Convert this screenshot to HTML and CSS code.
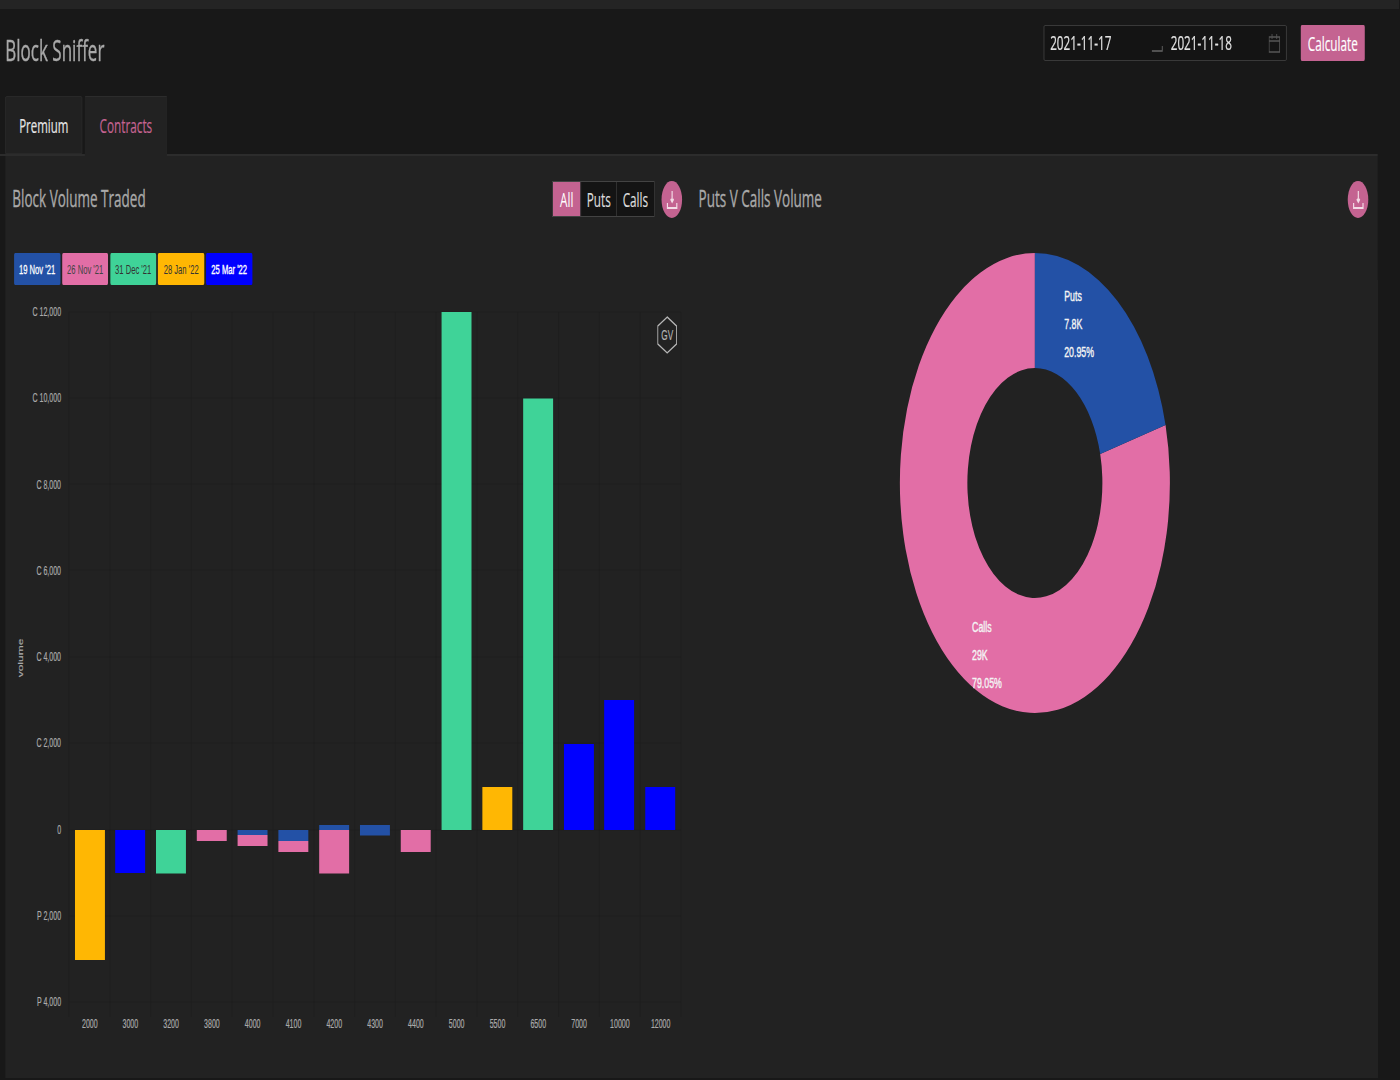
FILE: index.html
```html
<!DOCTYPE html>
<html lang="en">
<head>
<meta charset="utf-8">
<title>Block Sniffer</title>
<link rel="stylesheet" href="styles.css">
</head>
<body>
<div class="frame">
<div class="page">
  <div class="topbar"></div>
  <header class="header">
    <h1 class="brand">Block Sniffer</h1>
    <div class="controls">
      <div class="picker">
        <span class="date">2021-11-17</span>
        <svg class="range-arrow" width="20" height="8" viewBox="0 0 20 8"><path d="M0 7H18V2"/></svg>
        <span class="date">2021-11-18</span>
        <svg class="cal" width="20" height="20" viewBox="0 0 20 20"><path d="M1 4H19V19H1ZM1 8H19M6 1V6M14 1V6"/></svg>
      </div>
      <button class="calc">Calculate</button>
    </div>
  </header>
  <nav class="tabs">
    <div class="tab">Premium</div>
    <div class="tab active">Contracts</div>
  </nav>
  <main class="panel">
    <section class="col">
      <div class="col-head">
        <h2 class="col-title">Block Volume Traded</h2>
        <div class="tools">
          <div class="seg">
            <span class="seg-item on">All</span>
            <span class="seg-item puts">Puts</span>
            <span class="seg-item calls">Calls</span>
          </div>
          <button class="dl"><svg width="20" height="20" viewBox="0 0 20 20"><path d="M10 1V11M7.5 9L10 12L12.5 9M2 13V18H18V13"/></svg></button>
        </div>
      </div>
      <div class="legend">
        <span class="chip c-blue">19 Nov '21</span>
        <span class="chip c-pink">26 Nov '21</span>
        <span class="chip c-green">31 Dec '21</span>
        <span class="chip c-amber">28 Jan '22</span>
        <span class="chip c-pure">25 Mar '22</span>
      </div>
      <svg class="bars" width="1142" height="745" viewBox="0 0 1142 745">
        <g class="grid">
          <path d="M96.5 12H1139M96.5 98H1139M96.5 184H1139M96.5 270H1139M96.5 357H1139M96.5 443H1139M96.5 530H1139M96.5 616H1139M96.5 702H1139"/>
          <path d="M96.5 12V717M166 12V717M235.5 12V717M305 12V717M374.5 12V717M444 12V717M513.5 12V717M583 12V717M652.5 12V717M722 12V717M791.5 12V717M861 12V717M930.5 12V717M1000 12V717M1069.5 12V717M1139 12V717"/>
        </g>
        <g class="ylab">
          <text x="83" y="16">C 12,000</text>
          <text x="83" y="102">C 10,000</text>
          <text x="83" y="189">C 8,000</text>
          <text x="83" y="275">C 6,000</text>
          <text x="83" y="361">C 4,000</text>
          <text x="83" y="447">C 2,000</text>
          <text x="83" y="534">0</text>
          <text x="83" y="620">P 2,000</text>
          <text x="83" y="706">P 4,000</text>
        </g>
        <text class="axis-name" transform="translate(19 358) rotate(-90)">volume</text>
        <rect class="f-amber" x="106.75" y="530" width="51" height="130"/>
        <rect class="f-pure" x="175.25" y="530" width="51" height="43"/>
        <rect class="f-green" x="244.75" y="530" width="51" height="43.5"/>
        <rect class="f-pink" x="314.25" y="530" width="51" height="11"/>
        <rect class="f-blue" x="383.75" y="530" width="51" height="5"/>
        <rect class="f-pink" x="383.75" y="535" width="51" height="11"/>
        <rect class="f-blue" x="453.25" y="530" width="51" height="11"/>
        <rect class="f-pink" x="453.25" y="541" width="51" height="11"/>
        <rect class="f-blue" x="522.75" y="525" width="51" height="5"/>
        <rect class="f-pink" x="522.75" y="530" width="51" height="43.5"/>
        <rect class="f-blue" x="592.25" y="525" width="51" height="10.5"/>
        <rect class="f-pink" x="661.75" y="530" width="51" height="22"/>
        <rect class="f-green" x="731.25" y="12" width="51" height="518"/>
        <rect class="f-amber" x="800.75" y="487" width="51" height="43"/>
        <rect class="f-green" x="870.25" y="98.5" width="51" height="431.5"/>
        <rect class="f-pure" x="939.75" y="444" width="51" height="86"/>
        <rect class="f-pure" x="1008.25" y="400" width="51" height="130"/>
        <rect class="f-pure" x="1078.25" y="487" width="51" height="43"/>
        <g class="xlab">
          <text x="132" y="728">2000</text>
          <text x="201" y="728">3000</text>
          <text x="270.5" y="728">3200</text>
          <text x="340" y="728">3800</text>
          <text x="409.5" y="728">4000</text>
          <text x="479" y="728">4100</text>
          <text x="548.5" y="728">4200</text>
          <text x="618" y="728">4300</text>
          <text x="687.5" y="728">4400</text>
          <text x="757" y="728">5000</text>
          <text x="826.5" y="728">5500</text>
          <text x="896" y="728">6500</text>
          <text x="965.5" y="728">7000</text>
          <text x="1035" y="728">10000</text>
          <text x="1104.5" y="728">12000</text>
        </g>
        <g class="mark">
          <path d="M1115.6 17L1131.6 26V44L1115.6 53L1099.6 44V26Z"/>
          <text x="1115.6" y="40">GV</text>
        </g>
      </svg>
    </section>
    <section class="col">
      <div class="col-head">
        <h2 class="col-title">Puts V Calls Volume</h2>
        <div class="tools">
          <button class="dl"><svg width="20" height="20" viewBox="0 0 20 20"><path d="M10 1V11M7.5 9L10 12L12.5 9M2 13V18H18V13"/></svg></button>
        </div>
      </div>
      <svg class="donut" width="480" height="480" viewBox="0 0 480 480">
        <path class="f-pink" d="M462.6 182.1A230 230 0 1 1 240 10L240 125A115 115 0 1 0 351.3 211.1Z"/>
        <path class="f-blue" d="M240 10A230 230 0 0 1 462.6 182.1L351.3 211.1A115 115 0 0 0 240 125Z"/>
        <g class="slice-label">
          <text x="290" y="58">Puts</text>
          <text x="290" y="86">7.8K</text>
          <text x="290" y="114">20.95%</text>
          <text x="133" y="389">Calls</text>
          <text x="133" y="417">29K</text>
          <text x="133" y="445">79.05%</text>
        </g>
      </svg>
    </section>
  </main>
</div>
</div>
</body>
</html>
```
FILE: styles.css
```css
* { box-sizing: border-box; }
html, body { margin: 0; height: 100%; background: #181818; overflow: hidden; }
body { font-family: "Open Sans", "Liberation Sans", sans-serif; }

.frame { width: 1400px; height: 1080px; overflow: hidden; }

/* The whole app is laid out wide and squeezed horizontally, as in the reference */
.page {
  width: 2384px;
  height: 1080px;
  padding-right: 37px;
  transform: scaleX(0.587);
  transform-origin: 0 0;
  display: flex;
  flex-direction: column;
}

.topbar { height: 9px; margin-right: -37px; background: #242424; flex: none; }

.header {
  height: 87px;
  flex: none;
  display: flex;
  justify-content: space-between;
  align-items: flex-start;
  padding-left: 9px;
  padding-right: 22px;
}
.brand { margin: 22px 0 0; font-size: 29px; line-height: 38px; font-weight: 400; color: #a9a9a9; -webkit-text-stroke: .4px #a9a9a9; }
.controls { display: flex; align-items: flex-start; gap: 24px; margin-top: 16px; }
.picker {
  width: 414px;
  height: 36px;
  display: flex;
  align-items: center;
  padding: 0 10px;
  background: #141414;
  border: 1px solid #434343;
  border-radius: 2px;
}
.date { font-size: 20px; color: #e4e4e4; line-height: 34px; -webkit-text-stroke: .2px #e4e4e4; }
.range-arrow { margin: 10px 12px 0 69px; fill: none; stroke: #666; stroke-width: 1.5; }
.cal { margin-left: auto; margin-right: 0; fill: none; stroke: #555; stroke-width: 1.5; }
.calc {
  width: 109px;
  height: 36px;
  padding: 0;
  border: 0;
  border-radius: 2px;
  background: #c46391;
  color: #fff;
  font: 20px "Open Sans", sans-serif;
  -webkit-text-stroke: .2px #fff;
}

.tabs {
  height: 60px;
  flex: none;
  display: flex;
  gap: 4px;
  padding-left: 9px;
  border-bottom: 2px solid #2c2c2c;
}
.tab {
  height: 58px;
  width: 131px;
  background: #212121;
  border: 1px solid #2c2c2c;
  border-radius: 2px 2px 0 0;
  display: flex;
  align-items: center;
  justify-content: center;
  font-size: 19.5px;
  color: #e6e6e6;
  -webkit-text-stroke: .2px #e6e6e6;
}
.tab.active { width: 141px; height: 60px; padding-bottom: 2px; background: #222; border-bottom: 0; color: #c46391; font-size: 20px; -webkit-text-stroke: .2px #c46391; }

.panel {
  margin: 0 0 2px 9px;
  flex: 1;
  background: #222;
  display: grid;
  grid-template-columns: 1fr 1fr;
}
.col { padding: 25px 16px 0 12px; min-width: 0; }
.col-head { height: 37px; display: flex; justify-content: space-between; align-items: center; }
.col-title { margin: 0 0 4px; font-size: 23px; font-weight: 400; color: #a9a9a9; -webkit-text-stroke: .35px #a9a9a9; }
.tools { display: flex; gap: 12px; align-items: flex-start; height: 37px; }
.seg { display: flex; height: 36px; border: 1px solid #434343; }
.seg-item {
  display: flex;
  align-items: center;
  justify-content: center;
  font-size: 20px;
  color: #dcdcdc;
  background: #141414;
  border-left: 1px solid #434343;
  -webkit-text-stroke: .2px #dcdcdc;
}
.seg-item.on { width: 47px; background: #c46391; color: #fff; border-left: 0; -webkit-text-stroke: 0; }
.seg-item.puts { width: 61px; }
.seg-item.calls { width: 64px; }
.dl {
  width: 35px;
  height: 37px;
  padding: 0;
  border: 0;
  border-radius: 50%;
  background: #c46391;
  display: flex;
  align-items: center;
  justify-content: center;
}
.dl svg { fill: none; stroke: #f3dbe6; stroke-width: 2; }

.legend { display: flex; gap: 3.3px; margin: 35px 0 0 3px; }
.chip {
  width: 78.5px;
  height: 32px;
  display: flex;
  align-items: center;
  justify-content: center;
  border-radius: 2px;
  font: 13px "Liberation Sans", sans-serif;
  white-space: nowrap;
}
.c-blue { background: #2351a6; color: #fff; -webkit-text-stroke: .3px #fff; }
.c-pink { background: #e26ea6; color: #444; }
.c-green { background: #3fd398; color: #333; }
.c-amber { background: #ffb703; color: #333; }
.c-pure { background: #0000ff; color: #fff; -webkit-text-stroke: .4px #fff; }

.bars { display: block; margin-top: 15px; }
.grid path { fill: none; stroke: #1d1d1d; stroke-width: 1; opacity: .5; }
.bars text { font-family: "Liberation Sans", sans-serif; font-size: 12px; fill: #aaa; stroke: #aaa; stroke-width: .2px; }
.ylab text { text-anchor: end; }
.xlab text { text-anchor: middle; }
.bars .axis-name { font-size: 12px; text-anchor: middle; }
.mark path { fill: none; stroke: #b5b5b5; stroke-width: 1.5; }
.bars .mark text { font-size: 14px; text-anchor: middle; fill: #b5b5b5; }

.f-blue { fill: #2351a6; }
.f-pink { fill: #e26ea6; }
.f-green { fill: #3fd398; }
.f-amber { fill: #ffb703; }
.f-pure { fill: #0000ff; }

.donut { display: block; margin: 25px auto 0; transform: translateX(2px); }
.slice-label text { font-family: "Liberation Sans", sans-serif; font-size: 15px; fill: #f4f4f4; stroke: #f4f4f4; stroke-width: .4px; }
```
